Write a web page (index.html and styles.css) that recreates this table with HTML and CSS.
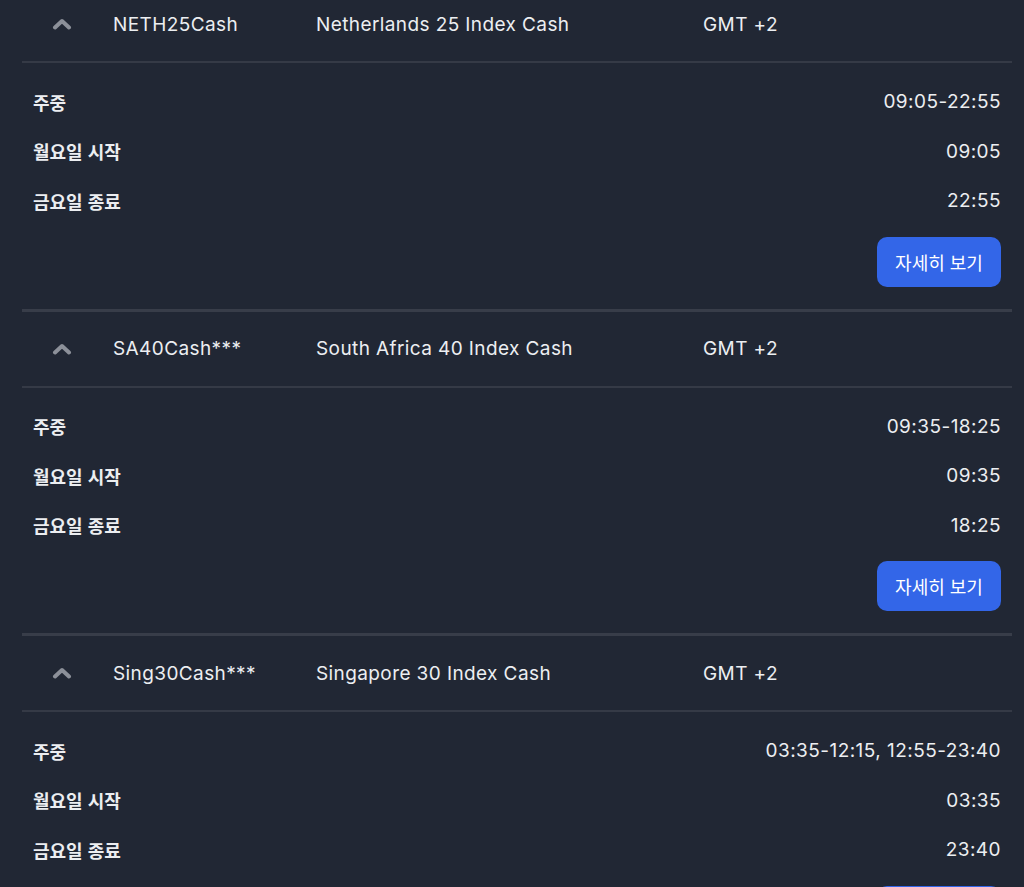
FILE: index.html
```html
<!DOCTYPE html>
<html lang="ko">
<head>
<meta charset="utf-8">
<link rel="stylesheet" href="styles.css">
</head>
<body>
<div class="list">
  <section class="item">
    <div class="head">
      <span class="chev"><svg width="20" height="12" viewBox="0 0 20 12"><polyline points="3,9.5 10,3 17,9.5" fill="none" stroke="#8c9099" stroke-width="4" stroke-linecap="round" stroke-linejoin="round"/></svg></span>
      <span class="sym">NETH25Cash</span>
      <span class="desc">Netherlands 25 Index Cash</span>
      <span class="tz">GMT +2</span>
    </div>
    <div class="body">
      <div class="row"><span class="lbl">주중</span><span class="val">09:05-22:55</span></div>
      <div class="row"><span class="lbl">월요일 시작</span><span class="val">09:05</span></div>
      <div class="row"><span class="lbl">금요일 종료</span><span class="val">22:55</span></div>
      <div class="actions"><button class="btn">자세히 보기</button></div>
    </div>
  </section>
  <section class="item">
    <div class="head">
      <span class="chev"><svg width="20" height="12" viewBox="0 0 20 12"><polyline points="3,9.5 10,3 17,9.5" fill="none" stroke="#8c9099" stroke-width="4" stroke-linecap="round" stroke-linejoin="round"/></svg></span>
      <span class="sym">SA40Cash***</span>
      <span class="desc">South Africa 40 Index Cash</span>
      <span class="tz">GMT +2</span>
    </div>
    <div class="body">
      <div class="row"><span class="lbl">주중</span><span class="val">09:35-18:25</span></div>
      <div class="row"><span class="lbl">월요일 시작</span><span class="val">09:35</span></div>
      <div class="row"><span class="lbl">금요일 종료</span><span class="val">18:25</span></div>
      <div class="actions"><button class="btn">자세히 보기</button></div>
    </div>
  </section>
  <section class="item">
    <div class="head">
      <span class="chev"><svg width="20" height="12" viewBox="0 0 20 12"><polyline points="3,9.5 10,3 17,9.5" fill="none" stroke="#8c9099" stroke-width="4" stroke-linecap="round" stroke-linejoin="round"/></svg></span>
      <span class="sym">Sing30Cash***</span>
      <span class="desc">Singapore 30 Index Cash</span>
      <span class="tz">GMT +2</span>
    </div>
    <div class="body">
      <div class="row"><span class="lbl">주중</span><span class="val">03:35-12:15, 12:55-23:40</span></div>
      <div class="row"><span class="lbl">월요일 시작</span><span class="val">03:35</span></div>
      <div class="row"><span class="lbl">금요일 종료</span><span class="val">23:40</span></div>
      <div class="actions"><button class="btn">자세히 보기</button></div>
    </div>
  </section>
</div>
</body>
</html>
```
FILE: styles.css
```css
html, body {
  margin: 0;
  padding: 0;
  background: #212734;
  overflow: hidden;
}
body {
  font-family: Inter, "Noto Sans CJK KR", sans-serif;
  color: #eceef1;
  font-size: 19px;
}
.list {
  margin: -13px 12px 0 22px;
}
.item {
  border-bottom: 3px solid #383d49;
}
.head {
  display: flex;
  align-items: center;
  height: 74px;
  border-bottom: 2px solid #353a46;
  letter-spacing: 0.4px;
}
.chev {
  width: 40px;
  margin-left: 20px;
  display: flex;
  justify-content: center;
}
.chev svg { display: block; }
.sym {
  margin-left: 31px;
  width: 203px;
}
.desc {
  width: 387px;
}
.body {
  padding: 14px 11px 22px 11px;
}
.row {
  display: flex;
  justify-content: space-between;
  align-items: center;
  height: 49.5px;
}
.lbl {
  font-family: "Noto Sans CJK KR", sans-serif;
  font-weight: 700;
  font-size: 18px;
}
.val {
  letter-spacing: 0.45px;
}
.actions {
  display: flex;
  justify-content: flex-end;
  margin-top: 11px;
}
.btn {
  background: #3366e8;
  color: #ffffff;
  border: none;
  border-radius: 10px;
  width: 124px;
  height: 50px;
  font-family: "Noto Sans CJK KR", sans-serif;
  font-size: 18px;
  padding: 0;
}
```
